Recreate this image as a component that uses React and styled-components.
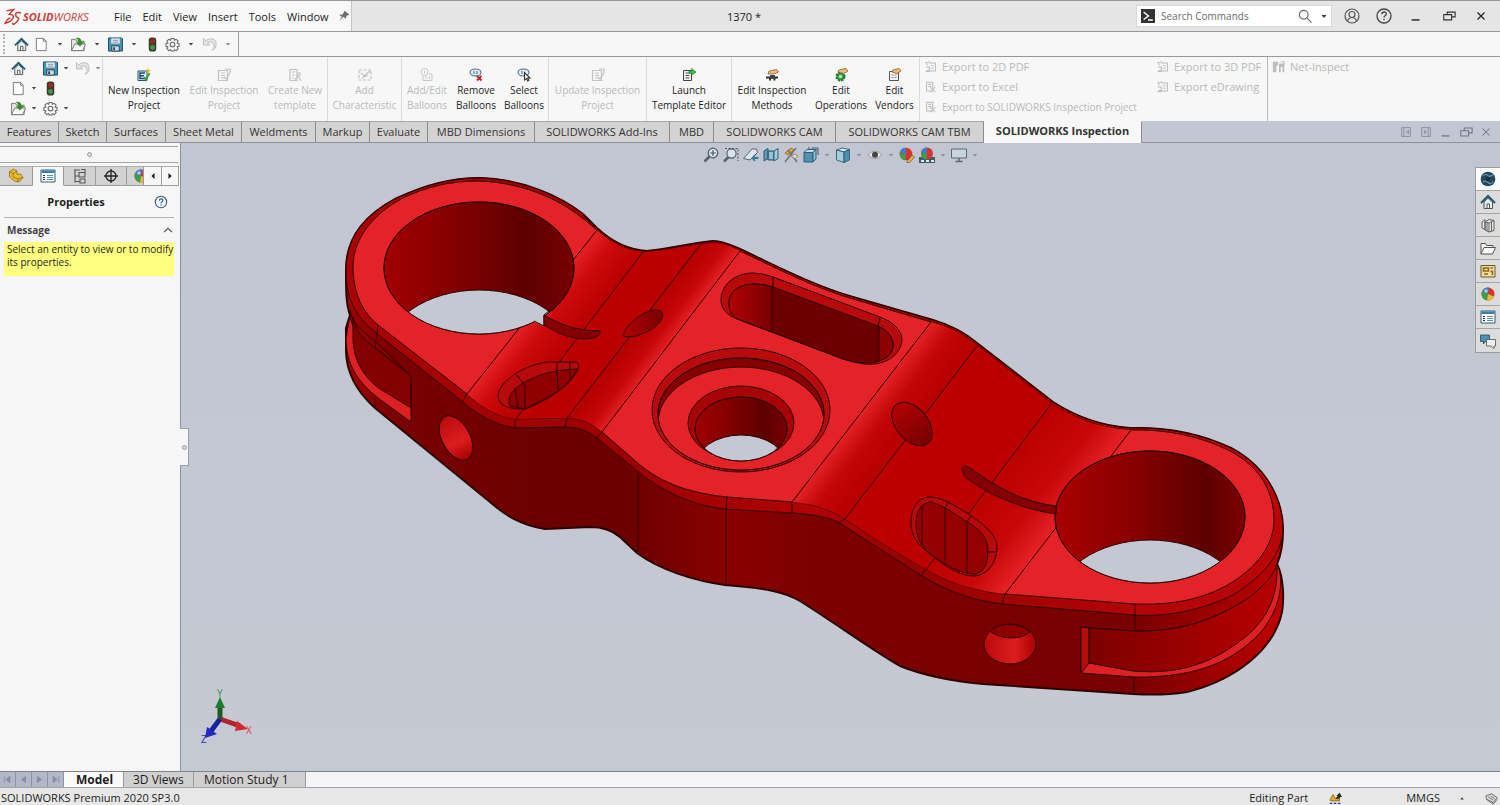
import React, { useState } from "react";
import styled, { createGlobalStyle } from "styled-components";

const GlobalStyle = createGlobalStyle`
  * {
    box-sizing: border-box;
  }
  html, body, #root {
    height: 100%;
    margin: 0;
  }
  body {
    font-family: "Open Sans", "Noto Sans", sans-serif;
    font-size: 11px;
    color: #1c1c1c;
    overflow: hidden;
  }
  button, input {
    font: inherit;
    color: inherit;
    border: 0;
    padding: 0;
    margin: 0;
    background: none;
  }
`;

// Page layout

const Window = styled.div`
  display: flex;
  flex-direction: column;
  height: 100%;
  background: #f7f7f7;
`;

const TitleBar = styled.header`
  display: flex;
  align-items: stretch;
  flex: none;
  height: 32px;
  background: #e5e5e5;
  border-top: 1px solid #98989a;
  border-bottom: 1px solid #98989a;
`;

const Brand = styled.div`
  display: flex;
  align-items: center;
  width: 352px;
  padding-left: 4px;
  background: #f8f8f8;
  border-right: 1px solid #c4c4c4;
`;

const BrandName = styled.span`
  width: 91px;
  margin-left: 2px;
  font-size: 11px;
  font-style: italic;
  color: #c8403a;
`;

const MenuBar = styled.nav`
  display: flex;
  align-items: center;
  gap: 11px;
  padding-top: 2px;
  margin-right: 9px;
`;

const MenuButton = styled.button`
  font-size: 11px;
  line-height: 16px;
`;

const DocumentName = styled.h1`
  flex: 1;
  align-self: center;
  margin: 0;
  font-size: 11px;
  font-weight: 400;
  text-align: center;
`;

const SearchBox = styled.label`
  display: flex;
  align-items: center;
  align-self: center;
  gap: 6px;
  width: 196px;
  height: 22px;
  padding: 0 1px 0 4px;
  background: #fff;
  border: 1px solid #d8d8d8;
`;

const SearchInput = styled.input`
  flex: 1;
  min-width: 0;
  font-size: 10px;
  outline: none;
  &::placeholder {
    color: #6a6a6a;
    opacity: 1;
  }
`;

const WindowButtons = styled.div`
  display: flex;
  align-items: center;
  padding: 0 3px 0 4px;
`;

const IconButton = styled.button`
  display: flex;
  align-items: center;
  justify-content: center;
  flex: none;
  width: ${(p) => p.$w || 20}px;
  height: ${(p) => p.$h || 20}px;
`;

const QuickBar = styled.div`
  display: flex;
  align-items: center;
  flex: none;
  height: 25px;
  border-bottom: 1px solid #98989a;
`;

const QuickTools = styled.div`
  display: flex;
  align-items: center;
  width: 239px;
  height: 100%;
  padding-left: 8px;
  border-right: 1px solid #a0a0a0;
`;

const Grip = styled.span`
  width: 3px;
  height: 20px;
  border-left: 2px dotted #b4b4b4;
  margin-left: -5px;
  margin-right: 5px;
`;

const Ribbon = styled.div`
  display: flex;
  flex: none;
  height: 64px;
`;

const ToolGrid = styled.div`
  display: grid;
  grid-template-columns: 20px 12px 20px 12px 20px 12px;
  grid-template-rows: repeat(3, 20px);
  align-items: center;
  width: 103px;
  padding: 1px 0 0 8px;
  border-right: 1px solid #dadada;
`;

const RibbonGroup = styled.div`
  display: flex;
  border-right: 1px solid #dadada;
`;

const RibbonButton = styled.button`
  display: flex;
  flex-direction: column;
  align-items: center;
  width: ${(p) => p.$w}px;
  padding-top: 10px;
  font-size: 10px;
  line-height: 15px;
  white-space: nowrap;
  color: ${(p) => (p.disabled ? "#b9b9b9" : "#1c1c1c")};
`;

const ExportGroup = styled.div`
  display: grid;
  grid-auto-flow: column;
  grid-template-rows: repeat(3, 20px);
  grid-template-columns: ${(p) => p.$columns};
  align-items: center;
  padding: 1px 0 0 4px;
  border-right: ${(p) => (p.$last ? "0" : "1px solid #b8b8b8")};
`;

const ExportButton = styled.button`
  display: flex;
  align-items: center;
  gap: 4px;
  height: 20px;
  font-size: ${(p) => (p.$long ? 10 : 11)}px;
  line-height: 16px;
  padding-bottom: 2px;
  white-space: nowrap;
  color: #b9b9b9;
`;

const TabRow = styled.div`
  display: flex;
  align-items: stretch;
  flex: none;
  height: 22px;
  background: #c3c7d3;
  border-bottom: 1px solid #8e929c;
`;

const CommandTab = styled.button`
  width: ${(p) => p.$w}px;
  height: ${(p) => (p.$active ? 22 : 21)}px;
  padding-bottom: ${(p) => (p.$active ? 3 : 1)}px;
  white-space: nowrap;
  line-height: 18px;
  font-weight: ${(p) => (p.$active ? 700 : 400)};
  color: #333;
  background: ${(p) => (p.$active ? "#f8f8f8" : "#d3d3d3")};
  border-top: 1px solid ${(p) => (p.$active ? "#f8f8f8" : "#a8a8a8")};
  border-right: 1px solid #8c8c8c;
`;

const DocButtons = styled.div`
  display: flex;
  align-items: center;
  margin-left: auto;
  padding-right: 4px;
`;

const Workspace = styled.main`
  display: flex;
  flex: 1;
  min-height: 0;
`;

const SidePanel = styled.aside`
  position: relative;
  flex: none;
  width: 181px;
  background: #f6f6f6;
  border-right: 1px solid #8e929c;
`;

const Splitter = styled.div`
  display: flex;
  align-items: center;
  justify-content: center;
  height: 17px;
  width: 178px;
  margin-top: 3px;
  border-top: 1px solid #a6a6a6;
  border-bottom: 1px solid #a6a6a6;
`;

const Dot = styled.span`
  width: 5px;
  height: 5px;
  border: 1px solid #9a9a9a;
  border-radius: 50%;
  background: #ddd;
`;

const PanelTabs = styled.div`
  display: flex;
  width: 178px;
  margin-top: 3px;
  height: 20px;
`;

const PanelTab = styled.button`
  display: flex;
  flex: none;
  align-items: center;
  justify-content: ${(p) => (p.$cut ? "flex-start" : "center")};
  width: ${(p) => p.$w}px;
  padding-left: ${(p) => (p.$cut ? 6 : 0)}px;
  overflow: hidden;
  background: ${(p) => (p.$light ? "#f6f6f6" : "#d2d2d2")};
  border-right: 1px solid #9c9c9c;
  border-top: 1px solid #b0b0b0;
  border-bottom: 1px solid ${(p) => (p.$active ? "#f6f6f6" : "#9c9c9c")};
`;

const PanelHeader = styled.div`
  display: flex;
  align-items: center;
  height: 32px;
  margin: 0 6px 0 4px;
  border-bottom: 1px solid #b4b4b4;
`;

const PanelTitle = styled.h2`
  flex: 1;
  margin: 0;
  font-size: 11px;
  font-weight: 700;
  text-align: center;
`;

const MessageToggle = styled.button`
  display: flex;
  align-items: center;
  justify-content: space-between;
  width: 175px;
  height: 24px;
  padding: 0 0 0 7px;
  font-size: 10px;
  font-weight: 700;
  color: #444;
`;

const MessageBox = styled.p`
  width: 170px;
  height: 34px;
  margin: 0 0 0 4px;
  padding: 1px 0 0 3px;
  font-size: 10px;
  line-height: 13px;
  white-space: nowrap;
  background: #ffff80;
`;

const CollapseHandle = styled.button`
  position: absolute;
  z-index: 1;
  left: 180px;
  top: 285px;
  display: flex;
  align-items: center;
  justify-content: center;
  width: 9px;
  height: 38px;
  background: #f6f6f6;
  border: 1px solid #9a9ea8;
  border-left: 0;
`;

const Viewport = styled.section`
  position: relative;
  flex: 1;
  min-width: 0;
  background: linear-gradient(#c2c6d2, #c4c9d2);
`;

const Scene = styled.svg`
  display: block;
  width: 100%;
  height: 100%;
`;

const ViewTools = styled.div`
  position: absolute;
  top: 2px;
  left: 0;
  right: 0;
  display: flex;
  justify-content: center;
`;

const TaskPane = styled.div`
  position: absolute;
  top: 24px;
  right: 0;
  width: 25px;
  border: 1px solid #9a9a9a;
  border-right: 0;
`;

const TaskButton = styled.button`
  display: flex;
  align-items: center;
  justify-content: center;
  width: 24px;
  height: 23px;
  background: ${(p) => (p.$active ? "#fbfbfb" : "#dcdcdc")};
  border-bottom: 1px solid #a4a4a4;
  &:last-child {
    border-bottom: 0;
  }
`;

const SheetTabs = styled.div`
  display: flex;
  flex: none;
  height: 17px;
  background: #f5f5f8;
  border-top: 1px solid #7e828c;
  border-bottom: 1px solid #a0a4ac;
`;

const SheetNav = styled.button`
  display: flex;
  align-items: center;
  justify-content: center;
  width: 16px;
  background: #b3b7c8;
  border-right: 1px solid #8d91a4;
`;

const SheetTab = styled.button`
  width: ${(p) => p.$w}px;
  padding: 0 4px 0 ${(p) => p.$pad}px;
  font-size: 12px;
  line-height: 15px;
  text-align: left;
  white-space: nowrap;
  font-weight: ${(p) => (p.$active ? 700 : 400)};
  background: ${(p) => (p.$active ? "#fafafa" : "#d0d0d0")};
  border-right: 1px solid #9a9a9a;
`;

const StatusBar = styled.footer`
  display: flex;
  align-items: center;
  flex: none;
  height: 17px;
  padding: 3px 1px 0;
  line-height: 14px;
  background: #e7e7e7;
`;

const StatusText = styled.span`
  margin-left: ${(p) => p.$gap || 0}px;
`;

const StatusRight = styled.div`
  display: flex;
  align-items: center;
  margin-left: auto;
`;

// Icons, all on a 16 x 16 grid

const glyphs = {
  ds: (
    <g fill="none" stroke="#c8352c" strokeWidth="1.300" strokeLinecap="round">
      <path d="M3 2.500L9 1.500 5 6q5 0 3.500 3.500T1 14.500Q3 10 5.500 9.500" />
      <path d="M15.500 4.500q-4.500-1-4.500 1.500t2 3t-1 4-4 1.500" />
    </g>
  ),
  caret: <path d="M4.500 6.500h7L8 10.500z" fill="#444" />,
  caretGray: <path d="M4.500 6.500h7L8 10.500z" fill="#888c94" />,
  caretUp: <path d="M5.500 10h5l-2.500-3z" fill="#444" />,
  home: (
    <g>
      <path d="M4 8v6.500h8.500V8L8 4z" fill="#e8eef0" stroke="#555" />
      <path d="M1 9L8 2 15 9" fill="none" stroke="#24586e" strokeWidth="2" />
      <path d="M7 14v-4h2.500v4" fill="#fff" stroke="#555" />
    </g>
  ),
  doc: <path d="M2.500 1.500h7.500l3 3v10H2.500zM10 1.500v3h3" fill="#fff" stroke="#777" />,
  open: (
    <g>
      <path d="M.5 14.500V2.500h4.500l1 2H14v10z" fill="#e8e4da" stroke="#777" />
      <path d="M.5 14.500l3.500-7h11.500L12.500 14.500z" fill="#fafafa" stroke="#777" />
      <path d="M5 1q6-1 6 4h3L9.500 10 5 5.500H8q0-3-3-4.500z" fill="#3a8a2f" />
    </g>
  ),
  save: (
    <g>
      <path d="M.5 1h14l1 1v13H.5z" fill="#4b93b4" stroke="#1d4a60" />
      <path d="M3.500 1.500h9V7h-9z" fill="#eaf2f5" />
      <path d="M5 3.500h6M5 5.500h6" stroke="#889" />
      <path d="M4 9.500h8V15H4z" fill="#cfdde3" stroke="#1d4a60" />
      <path d="M5.500 11h2v3h-2z" fill="#345" />
    </g>
  ),
  light: (
    <g>
      <rect x="4" y=".5" width="8" height="15" rx="3" fill="#33402c" />
      <circle cx="8" cy="4.500" r="2.600" fill="#a4251b" />
      <circle cx="8" cy="11.200" r="2.600" fill="#50914b" />
    </g>
  ),
  gear: (
    <g fill="#f5f5f5" stroke="#666" strokeWidth="1.100">
      <path d="M6.500 1.500h3l.5 2 2-1 2 2-1 2 2 .5v3l-2 .5 1 2-2 2-2-1-.5 1.500h-3l-.5-1.500-2 1-2-2 1-2-2-.5V7l2-.5-1-2 2-2 2 1z" />
      <circle cx="8" cy="8" r="2.500" />
    </g>
  ),
  undo: (
    <path d="M1.500 1.500v7h6.500L6 6q5-2 6.500 2t-2 6q5-1 4.500-7T9 2 4 4.500z" fill="#e4e4e4" stroke="#bdbdbd" />
  ),
  pin: <path d="M9 1l6 5-1.500 1-2 .5-1 4-3.500-2.500L1.500 15 5 9 1.500 6.500l5-1L7.500 3z" fill="#707070" />,
  prompt: (
    <g>
      <path d="M0 0h16v16H0z" fill="#333" />
      <path d="M3 3.500L8.500 8 3 12M8 12.500h5.500" fill="none" stroke="#fff" strokeWidth="1.600" />
    </g>
  ),
  search: (
    <g fill="none" stroke="#666" strokeWidth="1.300">
      <circle cx="6.500" cy="6.500" r="5" />
      <path d="M10.500 10.500l5 5" />
    </g>
  ),
  user: (
    <g fill="none" stroke="#555" strokeWidth="1.200">
      <circle cx="8" cy="8" r="7" />
      <circle cx="8" cy="6.500" r="3" />
      <path d="M3.500 13q1-3.500 4.500-3.500t4.500 3.500" />
    </g>
  ),
  help: (
    <g fill="none" stroke="#444" strokeWidth="1.300">
      <circle cx="8" cy="8" r="7" />
      <path d="M5.700 6.200q.3-2.200 2.400-2.200t2.200 2q0 1-1.200 1.700T8 9.500M8 10.800v1.500" />
    </g>
  ),
  helpBlue: (
    <g fill="#eef4f8" stroke="#33566e" strokeWidth="1.200">
      <circle cx="8" cy="8" r="6.500" />
      <path d="M6 6.400q.3-2 2.100-2t2 1.800q0 .9-1.100 1.600T8 9.400M8 10.600v1.400" fill="none" />
    </g>
  ),
  min: <path d="M3 12.500h9" stroke="#333" strokeWidth="1.800" />,
  restore: <path d="M6 6V3.500h9V9h-4M2 6.500h9v6H2z" fill="none" stroke="#333" strokeWidth="1.300" />,
  close: <path d="M4 4l8 8M12 4l-8 8" stroke="#222" strokeWidth="1.500" />,
  minGray: <path d="M3 12.500h9" stroke="#727680" strokeWidth="1.500" />,
  restoreGray: <path d="M6 6V3.500h9V9h-4M2 6.500h9v6H2z" fill="none" stroke="#727680" strokeWidth="1.200" />,
  closeGray: <path d="M4 4l8 8M12 4l-8 8" stroke="#727680" strokeWidth="1.200" />,
  panelLeft: <path d="M3 3h10v10H3zM5.500 3v10M11 6L8.500 8 11 10z" fill="none" stroke="#858993" />,
  panelRight: <path d="M3 3h10v10H3zM10.500 3v10M6 6l2.500 2L6 10z" fill="none" stroke="#858993" />,
  newInspection: (
    <g>
      <path d="M2 4h9v9.500H2z" fill="#dff0f8" stroke="#1d5573" />
      <path d="M9 6H4v5.500h5M4 8.700h4" fill="none" stroke="#1d4a78" strokeWidth="1.500" />
      <path d="M8.500 10l1.500 3 3.500-7" fill="none" stroke="#4c9a3a" strokeWidth="1.800" />
      <path d="M12 1l1 2 2 .5-2 1-.5 2.500-1.500-2.500L9 4l2-.7z" fill="#e8b822" />
    </g>
  ),
  grayForm: (
    <g fill="none" stroke="#c2c2c2" strokeWidth="1.200">
      <path d="M2.500 3.500h9v10h-9zM5 6h4M5 8.500h4M5 11h3" />
      <path d="M8 10l2 2 4-6M9 2h5v4" />
    </g>
  ),
  grayTemplate: (
    <g fill="none" stroke="#c2c2c2" strokeWidth="1.200">
      <path d="M3 2.500h7v11H3zM5 5h3M5 8h3M5 11h2" />
      <path d="M8 13l3-5 3 6M10 6h3v3" />
    </g>
  ),
  grayCharacteristic: (
    <g fill="none" stroke="#c2c2c2" strokeWidth="1.200">
      <path d="M2 3h12v10H2z" strokeDasharray="3 1.500" />
      <path d="M4 6l3 3 6-5M5 11l6-3" />
    </g>
  ),
  grayBalloon: (
    <g fill="none" stroke="#c8c8c8">
      <circle cx="5.500" cy="5" r="3.500" />
      <path d="M5.500 3.500v3M4 9v4.500h9V7H9.500M7 9v3M10.500 9v3" />
    </g>
  ),
  balloonRemove: (
    <g fill="none" stroke="#4c6f92" strokeWidth="1.100">
      <ellipse cx="7.500" cy="5.500" rx="5.500" ry="3.500" fill="#e4edf5" />
      <path d="M6 4v3M9 4v3" />
      <path d="M9 9l4.500 4.500M13.500 9L9 13.500" stroke="#c81e2b" strokeWidth="1.800" />
    </g>
  ),
  balloonSelect: (
    <g fill="none" stroke="#4c6f92" strokeWidth="1.100">
      <ellipse cx="7.500" cy="5.500" rx="5.500" ry="3.500" fill="#e4edf5" />
      <path d="M6 4v3" />
      <path d="M8.500 5.500v7.500l2-1.500 1.200 2.500 1.200-.7-1.200-2.300h2.300z" fill="#fff" stroke="#333" />
    </g>
  ),
  launch: (
    <g>
      <path d="M2.500 3.500h8v10h-8z" fill="#f2f2f2" stroke="#444" />
      <path d="M4.500 6h4M4.500 8.500h4M4.500 11h4" stroke="#555" />
      <path d="M8 4h2.500V1.500L15 5l-4.500 3.500V6.500H8z" fill="#3eb443" stroke="#237d2b" strokeWidth=".6" />
    </g>
  ),
  methods: (
    <g>
      <path d="M4 7q0-3.500 3.500-3.500l5-1 2 2.500-5 2z" fill="#f0b97b" stroke="#8a5a2c" strokeWidth=".8" />
      <path d="M2 9.500h12v2h-2.500v2h-2v-2H7v2H5v-2H2z" fill="#333" />
      <path d="M6 8h5v4H6z" fill="#444" />
    </g>
  ),
  operations: (
    <g>
      <circle cx="7.500" cy="9.500" r="4" fill="#2fa341" stroke="#1e7a2d" strokeWidth="2" strokeDasharray="2.200 1" />
      <circle cx="7.500" cy="9.500" r="1.600" fill="#d5f0cf" />
      <path d="M5 5q0-2.500 3-2.500l5-1 2 2.500-4.500 2.500z" fill="#f0b97b" stroke="#8a5a2c" strokeWidth=".8" />
    </g>
  ),
  vendors: (
    <g>
      <path d="M2.500 4.500h9v9h-9z" fill="#f1f1f1" stroke="#555" />
      <path d="M4.500 8h5M4.500 10.500h5" stroke="#888" strokeDasharray="2 1" />
      <path d="M5 5q0-2.500 3-2.500l4-1 2 2.500-4 2.500z" fill="#f0b97b" stroke="#8a5a2c" strokeWidth=".8" />
    </g>
  ),
  grayExport: (
    <g fill="none" stroke="#bcbcbc" strokeWidth="1.200">
      <path d="M6 3.500h7v9H6M8 6.500h3M8 9.500h3" />
      <path d="M7 2L2 3.500 4 6M2 8h4v5H2M5 11l-3 3" />
    </g>
  ),
  grayExcel: (
    <g fill="none" stroke="#bcbcbc" strokeWidth="1.200">
      <path d="M3 2.500h7v10H3zM5 5h3M5 7.500h3" />
      <path d="M7 8l6 6M13 8l-6 6" />
    </g>
  ),
  netInspect: (
    <g fill="#bebebe">
      <path d="M1 2h6v3L5 7v7H1zM8 4h6v10h-2V8h-2v6H8z" />
      <path d="M10 2h4v4" fill="none" stroke="#bbb" />
    </g>
  ),
  part: (
    <g fill="#e9bd35" stroke="#9a7410" strokeWidth=".9">
      <path d="M1.500 3.500l4-2.500 3.500 2v3.500l3.500-.5 2.500 3.500-4 4.500-4.500-1-5-4z" />
      <path d="M1.500 3.500l3.500 2v3.500l5 2 5-1.500M9 3L5 5.500M10 11v3" fill="none" />
    </g>
  ),
  list: (
    <g>
      <path d="M1 2h14v12H1z" fill="#fff" stroke="#345f78" />
      <path d="M1.500 2.500h13v2.500h-13z" fill="#3b80a3" />
      <path d="M3 7.500h2M3 9.500h2M3 11.500h2" stroke="#234" />
      <path d="M7 7.500h6M7 9.500h6M7 11.500h6" stroke="#5790ae" />
    </g>
  ),
  config: (
    <g fill="none" stroke="#555" strokeWidth="1.100">
      <path d="M3 1.500v13M2 2h6M3 8h4M3 13.500h5" />
      <path d="M7 4.500h6V9H7zM8 11h5v4H8zM9 1.500h4v3" />
    </g>
  ),
  target: (
    <g fill="none" stroke="#222" strokeWidth="1.300">
      <circle cx="8" cy="8" r="5" />
      <path d="M8 1v14M1 8h14" />
    </g>
  ),
  ball: (
    <g>
      <circle cx="8" cy="8" r="6.500" fill="#d8342b" />
      <path d="M8 8L2 5.500A6.500 6.500 0 0 1 9 1.600z" fill="#3f7bd0" />
      <path d="M8 8L2 5.500A6.500 6.500 0 0 0 7 14.400z" fill="#3aa144" />
      <path d="M8 8l-1 6.400q5 .4 7-4z" fill="#e5b93a" />
      <circle cx="6" cy="5" r="1.800" fill="#fff" opacity=".6" />
    </g>
  ),
  left: <path d="M10 4v8L6 8z" fill="#111" />,
  right: <path d="M6 4v8l4-4z" fill="#111" />,
  chevronUp: <path d="M3.500 10.500L8 6l4.500 4.500" fill="none" stroke="#555" strokeWidth="1.400" />,
  zoomFit: (
    <g fill="none" stroke="#4b5c66" strokeWidth="1.200">
      <circle cx="10" cy="6" r="4.800" fill="#d8e4ea" />
      <path d="M10 3v6M7 6h6" />
      <path d="M6.500 9.500L1.500 14.500" stroke="#5a6064" strokeWidth="2.500" />
    </g>
  ),
  zoomArea: (
    <g fill="none" stroke="#4b5c66" strokeWidth="1.100">
      <path d="M2 1.500h13V14" strokeDasharray="2 1.500" />
      <circle cx="8.500" cy="6.500" r="4.600" fill="#d8e4ea" />
      <path d="M5.500 10L1 14.500" stroke="#5a6064" strokeWidth="2.500" />
    </g>
  ),
  prevView: (
    <g stroke="#52656e" strokeWidth="1">
      <path d="M.5 11.500L9 2l4.500 0 1 3.500L7 13z" fill="#dfe7ea" />
      <path d="M15.500 11H9.500l2.500-3M9.500 11L12 14" fill="none" stroke="#2f7d99" strokeWidth="1.800" />
    </g>
  ),
  section: (
    <g stroke="#2c5d74" strokeWidth="1">
      <path d="M1 4l4-2.500v10L1 14zM5 4h6v9H5z" fill="#5d9cb7" />
      <path d="M11 4l4-2.500v10L11 14z" fill="#a8cddc" />
      <path d="M7 5v7M9 5v7" stroke="#d8e8ee" />
    </g>
  ),
  dynamic: (
    <g>
      <path d="M2 6l6-5 3 2-6 5z" fill="#e7a23b" stroke="#9a651a" strokeWidth=".8" />
      <path d="M2 15L13 1M5 3l9 12" stroke="#6c7478" strokeWidth="1.500" />
      <path d="M8 9l4-2 3 2-3 3z" fill="#e6d7b2" stroke="#777" strokeWidth=".7" />
    </g>
  ),
  orient: (
    <g stroke="#2c5d74">
      <path d="M1 5.500h9V15H1z" fill="#4f93b0" />
      <path d="M1 5.500l3-3h9l-3 3z" fill="#c3dde7" />
      <path d="M10 5.500l3-3V12l-3 3z" fill="#8fc0d2" />
      <path d="M8.500 1h6.500v7M5 1h2" fill="none" stroke="#456" />
    </g>
  ),
  cube: (
    <g stroke="#2c5d74" strokeWidth=".9">
      <path d="M1.500 3l5.500-2 7.500 1.500-5.500 2.500z" fill="#d8eaf0" />
      <path d="M1.500 3L9 5v10.500L1.500 13z" fill="#a5cddc" />
      <path d="M9 5l5.500-2.500V13L9 15.500z" fill="#4a8fae" />
    </g>
  ),
  eye: (
    <g>
      <path d="M1 8q7-8 14 0-7 7-14 0z" fill="#e4e4e6" stroke="#8a8a8a" strokeWidth=".8" />
      <circle cx="8" cy="7.800" r="3" fill="#454545" />
    </g>
  ),
  appearance: (
    <g>
      <circle cx="7" cy="7" r="6.300" fill="#d8342b" />
      <path d="M7 7L.7 6A6.300 6.300 0 0 1 7 .7z" fill="#3f7bd0" />
      <path d="M7 7L.7 6.500A6.300 6.300 0 0 0 6 13.300z" fill="#3aa144" />
      <path d="M8 14.500l5-6.500 2.500 2-5 5.500-2.500.5z" fill="#e6b450" stroke="#6b4b1a" strokeWidth=".7" />
    </g>
  ),
  scene: (
    <g>
      <path d="M0 10h16v6H0z" fill="#3e5a66" />
      <path d="M2 13h3v2H2zM7 13h3v2H7zM12 13h3v2h-3z" fill="#e0e8ea" />
      <circle cx="8" cy="6.500" r="6" fill="#d8342b" />
      <path d="M8 6.500L2 6A6 6 0 0 1 8 .5z" fill="#3f7bd0" />
      <path d="M8 6.500L2 6Q2.500 12 7.500 12.500z" fill="#3aa144" />
    </g>
  ),
  monitor: (
    <g stroke="#5b6772">
      <path d="M.5 2h15v9H.5z" fill="#c9d5de" />
      <path d="M4.500 14.500h7M8 11v3" fill="none" strokeWidth="1.500" />
    </g>
  ),
  globe: (
    <g>
      <circle cx="8" cy="8" r="7.300" fill="#26485f" />
      <path d="M3 4.500q3-2 5 0t5-1M3 11q2-2 5 .5t5-1" fill="none" stroke="#6d93ab" strokeWidth="1.200" />
      <circle cx="8" cy="8" r="2.200" fill="#16303f" />
    </g>
  ),
  library: (
    <g fill="#e6e6e2" stroke="#555" strokeWidth=".9">
      <path d="M2 5l3-2.500v10L2 11zM5 5l4-2.500 5 1v10L9 15l-4-2z" />
      <path d="M5 5l4 1v9M9 6l5-2.500M7 5.500v8.500M11.500 5v9" fill="none" />
    </g>
  ),
  folder: (
    <g fill="#fafafa" stroke="#555">
      <path d="M1 14V3.500h4.500l1 2h6.500v2" />
      <path d="M1 14l3-6.500h11.500L12.500 14z" />
    </g>
  ),
  palette: (
    <g>
      <path d="M1 2.500h14v11.500H1z" fill="#f2dc9c" stroke="#6b5a2c" />
      <path d="M3.500 5h5v3h-5zM4 11h4M10.500 5h2.500M10.500 8.500h2v3.500" fill="none" stroke="#8a661f" strokeWidth="1.500" />
    </g>
  ),
  forum: (
    <g strokeWidth=".8">
      <path d="M.5 2h9v6.500H5L3.500 11V8.500h-3z" fill="#4b93b4" stroke="#1d4a60" />
      <path d="M6.500 6.500h9V13H14v2.500L11 13H6.500z" fill="#eee" stroke="#555" />
    </g>
  ),
  first: <path d="M4 4v8M11 4v8L6 8z" fill="#888ca2" stroke="#888ca2" />,
  prev: <path d="M11 3.500v9L5 8z" fill="#888ca2" />,
  next: <path d="M5 3.500v9L11 8z" fill="#888ca2" />,
  last: <path d="M12 4v8M5 4v8l5-4z" fill="#888ca2" stroke="#888ca2" />,
  rebuild: (
    <g>
      <path d="M1 10l4-7 3 5 5-1v4H2z" fill="#e0a928" stroke="#6b4b12" strokeWidth=".8" />
      <path d="M8 8l3-3H9l4-4 3 5h-2q-1 3-6 2z" fill="#222" />
      <path d="M1 14h3M6 14h3M11 14h3" stroke="#223a70" strokeWidth="1.800" fill="none" />
    </g>
  ),
  tag: (
    <g fill="#ddd" stroke="#555" strokeWidth="1">
      <path d="M1 5l7-3 7 5-5 6-8-4z" />
      <path d="M4 6l6 4M7 4.500l5 4M2 9l8 6 5-6" fill="none" />
    </g>
  ),
};

const IconSvg = styled.svg`
  display: block;
  flex: none;
`;

const Icon = ({ name, size = 14 }) => (
  <IconSvg width={size} height={size} viewBox="0 0 16 16" aria-hidden="true">
    {glyphs[name]}
  </IconSvg>
);

// Data

const menus = ["File", "Edit", "View", "Insert", "Tools", "Window"];

const quickTools = [
  { icon: "home", label: "Home" },
  { icon: "doc", label: "New", menu: true },
  { icon: "open", label: "Open", menu: true },
  { icon: "save", label: "Save", menu: true },
  { icon: "light", label: "Rebuild" },
  { icon: "gear", label: "Options", menu: true },
  { icon: "undo", label: "Undo", menu: true, off: true },
];

const gridTools = [
  { icon: "home", label: "Home" },
  null,
  { icon: "save", label: "Save" },
  { icon: "caret", label: "Save menu" },
  { icon: "undo", label: "Undo" },
  { icon: "caretGray", label: "Undo menu" },
  { icon: "doc", label: "New" },
  { icon: "caret", label: "New menu" },
  { icon: "light", label: "Rebuild" },
  null,
  null,
  null,
  { icon: "open", label: "Open" },
  { icon: "caret", label: "Open menu" },
  { icon: "gear", label: "Options" },
  { icon: "caret", label: "Options menu" },
];

const ribbonGroups = [
  [
    { lines: ["New Inspection", "Project"], icon: "newInspection", w: 82 },
    { lines: ["Edit Inspection", "Project"], icon: "grayForm", w: 78, off: true },
    { lines: ["Create New", "template"], icon: "grayTemplate", w: 64, off: true },
  ],
  [{ lines: ["Add", "Characteristic"], icon: "grayCharacteristic", w: 73, off: true }],
  [
    { lines: ["Add/Edit", "Balloons"], icon: "grayBalloon", w: 50, off: true },
    { lines: ["Remove", "Balloons"], icon: "balloonRemove", w: 48 },
    { lines: ["Select", "Balloons"], icon: "balloonSelect", w: 48 },
  ],
  [{ lines: ["Update Inspection", "Project"], icon: "grayForm", w: 97, off: true }],
  [{ lines: ["Launch", "Template Editor"], icon: "launch", w: 84 }],
  [
    { lines: ["Edit Inspection", "Methods"], icon: "methods", w: 80 },
    { lines: ["Edit", "Operations"], icon: "operations", w: 58 },
    { lines: ["Edit", "Vendors"], icon: "vendors", w: 49 },
  ],
];

const exportItems = [
  { text: "Export to 2D PDF", icon: "grayExport" },
  { text: "Export to Excel", icon: "grayExcel" },
  { text: "Export to SOLIDWORKS Inspection Project", icon: "grayExcel", long: true },
  { text: "Export to 3D PDF", icon: "grayExport" },
  { text: "Export eDrawing", icon: "grayExport" },
];

const commandTabs = [
  ["Features", 59],
  ["Sketch", 48],
  ["Surfaces", 59],
  ["Sheet Metal", 76],
  ["Weldments", 74],
  ["Markup", 54],
  ["Evaluate", 58],
  ["MBD Dimensions", 107],
  ["SOLIDWORKS Add-Ins", 135],
  ["MBD", 44],
  ["SOLIDWORKS CAM", 122],
  ["SOLIDWORKS CAM TBM", 148],
  ["SOLIDWORKS Inspection", 158],
];

const viewTools = [
  { icon: "zoomFit", label: "Zoom to Fit" },
  { icon: "zoomArea", label: "Zoom to Area" },
  { icon: "prevView", label: "Previous View" },
  { icon: "section", label: "Section View" },
  { icon: "dynamic", label: "Dynamic Annotation Views" },
  { icon: "orient", label: "View Orientation", menu: true },
  { icon: "cube", label: "Display Style", menu: true },
  { icon: "eye", label: "Hide/Show Items", menu: true },
  { icon: "appearance", label: "Edit Appearance" },
  { icon: "scene", label: "Apply Scene", menu: true },
  { icon: "monitor", label: "View Settings", menu: true },
];

const taskTools = [
  ["globe", "3DEXPERIENCE"],
  ["home", "Resources"],
  ["library", "Design Library"],
  ["folder", "File Explorer"],
  ["palette", "View Palette"],
  ["ball", "Appearances"],
  ["list", "Custom Properties"],
  ["forum", "Forum"],
];

// The machined part and the origin triad

const TOP_FACE =
  "M353 265C354 238 373 214 403 198C426 187 450 181 478 181C520 182 557 198 581 217L597 230C612 244 628 251 645 252C665 251 690 244 713 243C723 243 731 246 740 251C778 269 815 288 853 299L931 322C950 327 963 334 977 345L1052 404C1075 419 1100 428 1131 430C1165 429 1200 436 1228 450C1260 466 1274 492 1274 520C1274 548 1252 573 1220 589C1192 602 1165 605 1135 604L1005 594C975 591 945 581 925 569L880 542L845 519C832 510 815 504 792 502L727 497C700 494 668 488 640 465L602 432C590 422 580 418 567 418L515 419C495 416 480 406 467 394L378 325C360 310 353 290 353 265Z";

const FILLET =
  "M346 270C346 235 367 214 397 198C425 185 450 178 480 178C522 179 560 196 583 214L597 228C613 243 630 250 647 251C670 249 690 243 713 241C722 241 731 245 740 249C778 267 815 286 853 297L933 320C953 326 965 333 977 343L1053 402C1075 416 1100 426 1130 428C1166 427 1202 434 1231 448C1265 466 1283 498 1283 530C1282 555 1262 577 1233 595C1200 611 1165 617 1135 615L1002 604C970 600 945 590 922 576L838 522C828 517 810 514 792 513L725 509C695 506 660 492 630 465L597 438C588 431 578 427 565 427L515 428C495 425 478 415 463 402L375 332C355 316 346 298 346 270Z";

const SILHOUETTE =
  "M346 270C346 235 367 214 397 198C425 185 450 178 480 178C522 179 560 196 583 214L597 228C613 243 630 250 647 251C670 249 690 243 713 241C722 241 731 245 740 249C778 267 815 286 853 297L933 320C953 326 965 333 977 343L1053 402C1075 416 1100 426 1130 428C1166 427 1202 434 1231 448C1265 466 1283 498 1283 530C1283 545 1281 555 1277 564C1284 578 1284 600 1282 612C1274 650 1235 680 1187 692C1168 695 1150 695 1133 694L983 684C950 681 925 676 900 666C875 652 835 623 800 601C785 592 765 588 725 585C695 581 660 570 637 553L620 537C612 530 602 527 590 527L545 529C520 525 505 515 490 502L375 408C355 390 346 372 346 350V328L350 315C346 305 346 290 346 270Z";

const LEFT_POCKET =
  "M498 395C499 380 530 362 550 362H577C582 366 574 380 560 390C548 399 536 405 525 409C508 409 498 406 498 395Z";

const RIGHT_POCKET =
  "M911 523C911 508 918 497 930 497C942 497 955 506 967 513C985 525 997 535 997 547C997 562 988 576 973 576C955 575 940 562 925 550C915 541 911 533 911 523Z";

const RIGHT_POCKET_FLOOR =
  "M916 523C916 512 921 503 930 502C943 505 955 514 967 522C982 530 988 540 988 550C988 562 985 571 976 574C958 574 940 562 927 551C918 541 916 533 916 523Z";

const Model = () => (
  <Scene viewBox="181 143 1319 628" role="img" aria-label="Part 1370">
    <defs>
      <clipPath id="top"><path d={TOP_FACE} /></clipPath>
      <clipPath id="boreL"><ellipse cx="479" cy="268" rx="95" ry="66" /></clipPath>
      <clipPath id="boreR"><ellipse cx="1150" cy="517" rx="95" ry="66" /></clipPath>
      <clipPath id="boreM"><ellipse cx="741" cy="429" rx="46" ry="32" /></clipPath>
      <clipPath id="recess"><ellipse cx="741" cy="414" rx="83" ry="56" /></clipPath>
      <linearGradient id="bend1" gradientUnits="userSpaceOnUse" x1="597" y1="230" x2="636" y2="261">
        <stop offset="0" stopColor="#e42226" />
        <stop offset=".4" stopColor="#cc0a0b" />
        <stop offset="1" stopColor="#b90000" />
      </linearGradient>
      <linearGradient id="bend2" gradientUnits="userSpaceOnUse" x1="700" y1="245" x2="728" y2="266">
        <stop offset="0" stopColor="#b40000" />
        <stop offset=".6" stopColor="#c60608" />
        <stop offset="1" stopColor="#e42226" />
      </linearGradient>
      <linearGradient id="bend3" gradientUnits="userSpaceOnUse" x1="931" y1="322" x2="971" y2="353">
        <stop offset="0" stopColor="#e22226" />
        <stop offset=".45" stopColor="#c30506" />
        <stop offset="1" stopColor="#b60000" />
      </linearGradient>
      <linearGradient id="bend4" gradientUnits="userSpaceOnUse" x1="1052" y1="403" x2="1114" y2="451">
        <stop offset="0" stopColor="#bb0000" />
        <stop offset=".6" stopColor="#c80708" />
        <stop offset="1" stopColor="#e42226" />
      </linearGradient>
      <linearGradient id="bore">
        <stop offset="0" stopColor="#a00000" />
        <stop offset=".35" stopColor="#850000" />
        <stop offset=".75" stopColor="#5c0000" />
        <stop offset="1" stopColor="#780000" />
      </linearGradient>
      <linearGradient id="bore2">
        <stop offset="0" stopColor="#a80000" />
        <stop offset=".4" stopColor="#8a0000" />
        <stop offset=".78" stopColor="#5c0000" />
        <stop offset="1" stopColor="#7c0000" />
      </linearGradient>
      <linearGradient id="side" gradientUnits="userSpaceOnUse" x1="346" y1="0" x2="1283" y2="0">
        <stop offset="0" stopColor="#a00000" />
        <stop offset=".05" stopColor="#7a0000" />
        <stop offset=".2" stopColor="#6c0000" />
        <stop offset=".3" stopColor="#6c0000" />
        <stop offset=".41" stopColor="#8a0000" />
        <stop offset=".5" stopColor="#7c0000" />
        <stop offset=".84" stopColor="#780000" />
        <stop offset="1" stopColor="#bd0000" />
      </linearGradient>
      <linearGradient id="edge" gradientUnits="userSpaceOnUse" x1="346" y1="0" x2="1283" y2="0">
        <stop offset="0" stopColor="#a80305" />
        <stop offset=".12" stopColor="#a40204" />
        <stop offset=".3" stopColor="#9c0000" />
        <stop offset=".5" stopColor="#b00406" />
        <stop offset=".6" stopColor="#960000" />
        <stop offset=".84" stopColor="#b20508" />
        <stop offset="1" stopColor="#b80508" />
      </linearGradient>
      <linearGradient id="wall" gradientUnits="userSpaceOnUse" x1="1088" y1="0" x2="1276" y2="0">
        <stop offset="0" stopColor="#7c0000" />
        <stop offset="1" stopColor="#b60000" />
      </linearGradient>
      <linearGradient id="drill">
        <stop offset="0" stopColor="#bb0a0c" />
        <stop offset=".6" stopColor="#dc1d20" />
        <stop offset="1" stopColor="#a80000" />
      </linearGradient>
      <linearGradient id="shaft">
        <stop offset="0" stopColor="#b00204" />
        <stop offset="1" stopColor="#780000" />
      </linearGradient>
    </defs>

    <g stroke="#2c0000" strokeLinejoin="round" fill="none">
      <path d={SILHOUETTE} fill="url(#side)" strokeWidth="2" />

      {/* grooves under both clamp ends */}
      <path d="M350 315C352 330 360 338 374 347L411 376V422L378 398C358 382 346 365 346 338Z" fill="#dd2024" />
      <path d="M353 317C356 332 362 338 374 347L411 376V408L380 389C362 376 353 358 353 338Z" fill="#820000" />
      <path d="M350 310C352 322 360 330 375 341L411 376" />
      <path d="M1081 627L1135 631C1180 632 1215 620 1250 597C1266 584 1274 575 1277 563C1285 582 1280 610 1260 633C1230 665 1190 678 1133 677L1081 673Z" fill="#dc2024" />
      <path d="M1081 627L1089 628V663L1081 673Z" fill="#b80b0c" />
      <path d="M1089 628L1135 631C1180 632 1215 620 1250 597C1266 584 1274 575 1277 563C1278 590 1272 612 1250 633C1215 663 1180 675 1133 671L1089 663Z" fill="url(#wall)" />

      <path d={FILLET} fill="url(#edge)" />
      <path d={TOP_FACE} fill="#e32327" />

      <g clipPath="url(#top)">
        <path d="M610 214L650 243L504 433L454 410Z" fill="url(#bend1)" stroke="none" />
        <path d="M650 243L707 236L560 427L504 433Z" fill="#bb0000" stroke="none" />
        <path d="M707 236L752 235L591 448L560 427Z" fill="url(#bend2)" stroke="none" />
        <path d="M943 306L989 330L833 534L780 518Z" fill="url(#bend3)" stroke="none" />
        <path d="M989 330L1060 393L910 590L833 534Z" fill="#bc0000" stroke="none" />
        <path d="M1060 393L1143 415L992 608L910 590Z" fill="url(#bend4)" stroke="none" />
        <path d="M597 230L467 394M643 252L515 420M700 245L567 418M740 251L602 432M931 322L792 502M977 346L845 519M1052 403L922 575M1131 430L1005 594" />
      </g>

      {/* fillet seams */}
      <path d="M378 325L375 349M375 398V408M467 394L462 403M515 420V429M567 418L565 427M602 432L596 439M727 497L726 509M792 502V513M845 519L838 523M925 569L921 577M1005 594L1002 604M1135 604V631M1134 677V694M583 215L597 230" />
      <path d="M638 471V554M726 509V585" />

      {/* clamp bores */}
      <ellipse cx="479" cy="268" rx="95" ry="66" fill="url(#bore)" />
      <g clipPath="url(#boreL)">
        <ellipse cx="479" cy="356" rx="95" ry="66" fill="#c4c8d2" />
      </g>
      <ellipse cx="479" cy="268" rx="95" ry="66" />
      <path d="M546 312L544 315V326L534 321Z" fill="#c4c8d2" stroke="#c4c8d2" />
      <path d="M534 321L544 326V315L551 309" />
      <path d="M544 315C560 325 578 331 600 331C601 336 594 339 584 339C567 338 555 332 544 325Z" fill="#850000" />
      <ellipse cx="1150" cy="517" rx="95" ry="66" fill="url(#bore2)" />
      <g clipPath="url(#boreR)">
        <ellipse cx="1150" cy="606" rx="95" ry="66" fill="#c4c8d2" />
      </g>
      <ellipse cx="1150" cy="517" rx="95" ry="66" />
      <path d="M962 468C963 465 967 466 972 469C1000 490 1025 502 1056 506V514C1020 509 985 493 964 476Z" fill="#850000" />

      {/* centre recess */}
      <ellipse cx="741" cy="410" rx="89" ry="62" fill="#b80b0d" />
      <ellipse cx="741" cy="414" rx="83" ry="56" fill="#860000" />
      <g clipPath="url(#recess)">
        <ellipse cx="741" cy="423" rx="83" ry="56" fill="#e32327" />
      </g>
      <ellipse cx="741" cy="414" rx="83" ry="56" />
      <ellipse cx="741" cy="423" rx="53" ry="37" fill="#a60406" />
      <ellipse cx="741" cy="429" rx="46" ry="32" fill="url(#bore)" />
      <g clipPath="url(#boreM)">
        <ellipse cx="741" cy="467" rx="46" ry="32" fill="#c4c8d2" />
      </g>
      <ellipse cx="741" cy="429" rx="46" ry="32" />

      {/* long slot */}
      <path d="M721 300C721 284 736 273 753 273Q763 273 773 277L880 317C893 322 902 330 902 340C901 355 885 366 865 364Q854 363 843 359L737 319C727 315 721 309 721 300Z" fill="#b60a0c" />
      <path d="M729 303C729 291 740 284 755 284Q764 284 773 287L878 326C888 330 893 338 893 345C893 356 880 363 867 363Q855 363 843 359L738 319C731 315 729 310 729 303Z" fill="#6c0000" />
      <path d="M772 287V332L738 319C731 315 729 310 729 303C729 291 740 284 755 284Q764 284 772 287Z" fill="url(#shaft)" />
      <path d="M879 327C888 330 893 338 893 345C893 354 887 358 879 361Z" fill="#8c0000" />
      <path d="M773 277V287M880 317L878 327" />

      {/* drilled holes */}
      <ellipse cx="912" cy="424" rx="25" ry="16" transform="rotate(50 912 424)" fill="url(#shaft)" />
      <path d="M623 336C625 325 645 309 657 310C667 312 663 321 652 329C641 336 630 338 623 336Z" fill="url(#shaft)" />
      <ellipse cx="456" cy="438" rx="24" ry="14" transform="rotate(62 456 438)" fill="url(#drill)" />
      <ellipse cx="1010" cy="644" rx="26" ry="20" fill="url(#drill)" />
      <path d="M990 631C1000 622 1020 622 1030 632C1022 640 1000 640 990 631Z" fill="#8c0000" />

      {/* lightening pockets */}
      <path d={LEFT_POCKET} fill="#b60a0c" />
      <path d="M510 406C506 396 515 387 527 381C542 373 555 370 577 369C572 381 560 390 550 396L525 409Z" fill="#900000" />
      <path d="M517 375L525 386V408M557 362V371L558 390M570 362V380M515 388L518 407" />
      <path d={RIGHT_POCKET} fill="#b60a0c" />
      <path d={RIGHT_POCKET_FLOOR} fill="#940000" />
      <path d="M922 506V545M945 508V562M967 522V572M949 501L945 508M971 516L967 522M988 552H997" />
    </g>

    {/* origin triad */}
    <g strokeWidth="5">
      <path d="M220 719L240 726" stroke="#b3242a" />
      <path d="M237 721L248 729L235 731Z" fill="#d02a2f" />
      <path d="M220 719L211 731" stroke="#1b1fa0" />
      <path d="M207 727L217 734L205 738Z" fill="#2228c4" />
      <path d="M220 719V706" stroke="#1c5a24" />
      <path d="M215 708L220 697L225 708Z" fill="#1f7a2b" />
    </g>
    <g fontSize="10" fontFamily="Open Sans, sans-serif">
      <text x="217" y="697" fill="#3a8a44">Y</text>
      <text x="246" y="734" fill="#d8484c">X</text>
      <text x="201" y="743" fill="#2a2fc0">Z</text>
    </g>
  </Scene>
);

const App = () => {
  const [tab, setTab] = useState("SOLIDWORKS Inspection");
  const [query, setQuery] = useState("");

  return (
    <Window>
      <GlobalStyle />
      <TitleBar>
        <Brand>
          <Icon name="ds" size={17} />
          <BrandName>
            <b>SOLID</b>WORKS
          </BrandName>
          <MenuBar>
            {menus.map((m) => (
              <MenuButton key={m}>{m}</MenuButton>
            ))}
          </MenuBar>
          <Icon name="pin" size={12} />
        </Brand>
        <DocumentName>1370 *</DocumentName>
        <SearchBox>
          <Icon name="prompt" />
          <SearchInput
            aria-label="Search Commands"
            placeholder="Search Commands"
            value={query}
            onChange={(e) => setQuery(e.target.value)}
          />
          <Icon name="search" />
          <Icon name="caret" size={12} />
        </SearchBox>
        <WindowButtons>
          <IconButton $w={32} aria-label="Account"><Icon name="user" size={16} /></IconButton>
          <IconButton $w={32} aria-label="Help"><Icon name="help" size={16} /></IconButton>
          <IconButton $w={32} aria-label="Minimize"><Icon name="min" /></IconButton>
          <IconButton $w={33} aria-label="Restore"><Icon name="restore" /></IconButton>
          <IconButton $w={32} aria-label="Close"><Icon name="close" /></IconButton>
        </WindowButtons>
      </TitleBar>

      <QuickBar>
        <QuickTools>
          <Grip />
          {quickTools.map((t) => (
            <React.Fragment key={t.label}>
              <IconButton aria-label={t.label}><Icon name={t.icon} size={15} /></IconButton>
              {t.menu && (
                <IconButton $w={17} aria-label={t.label + " menu"}>
                  <Icon name={t.off ? "caretGray" : "caret"} size={10} />
                </IconButton>
              )}
            </React.Fragment>
          ))}
        </QuickTools>
      </QuickBar>

      <Ribbon>
        <ToolGrid>
          {gridTools.map((t, i) =>
            t ? (
              <IconButton key={i} $w={t.icon.startsWith("caret") ? 12 : 20} aria-label={t.label}>
                <Icon name={t.icon} size={t.icon.startsWith("caret") ? 10 : 15} />
              </IconButton>
            ) : (
              <span key={i} />
            )
          )}
        </ToolGrid>
        {ribbonGroups.map((group, i) => (
          <RibbonGroup key={i}>
            {group.map((b) => (
              <RibbonButton key={b.lines.join(" ")} $w={b.w} disabled={b.off}>
                <Icon name={b.icon} size={16} />
                {b.lines.map((line) => (
                  <span key={line}>{line}</span>
                ))}
              </RibbonButton>
            ))}
          </RibbonGroup>
        ))}
        <ExportGroup $columns="232px 111px">
          {exportItems.map((x) => (
            <ExportButton key={x.text} $long={x.long} disabled>
              <Icon name={x.icon} />
              {x.text}
            </ExportButton>
          ))}
        </ExportGroup>
        <ExportGroup $columns="90px" $last>
          <ExportButton disabled>
            <Icon name="netInspect" />
            Net-Inspect
          </ExportButton>
        </ExportGroup>
      </Ribbon>

      <TabRow>
        {commandTabs.map(([name, w]) => (
          <CommandTab key={name} $w={w} $active={name === tab} onClick={() => setTab(name)}>
            {name}
          </CommandTab>
        ))}
        <DocButtons>
          <IconButton aria-label="Show left pane"><Icon name="panelLeft" /></IconButton>
          <IconButton aria-label="Show right pane"><Icon name="panelRight" /></IconButton>
          <IconButton aria-label="Minimize document"><Icon name="minGray" /></IconButton>
          <IconButton aria-label="Restore document"><Icon name="restoreGray" /></IconButton>
          <IconButton aria-label="Close document"><Icon name="closeGray" /></IconButton>
        </DocButtons>
      </TabRow>

      <Workspace>
        <SidePanel>
          <Splitter><Dot /></Splitter>
          <PanelTabs>
            <PanelTab $w={33} aria-label="Feature tree"><Icon name="part" size={16} /></PanelTab>
            <PanelTab $w={31} $light $active aria-label="Properties"><Icon name="list" size={16} /></PanelTab>
            <PanelTab $w={32} aria-label="Configurations"><Icon name="config" size={16} /></PanelTab>
            <PanelTab $w={31} aria-label="Dimensions"><Icon name="target" size={16} /></PanelTab>
            <PanelTab $w={17} $cut aria-label="Display"><Icon name="ball" size={16} /></PanelTab>
            <PanelTab $w={18} $light aria-label="Scroll left"><Icon name="left" size={12} /></PanelTab>
            <PanelTab $w={17} $light aria-label="Scroll right"><Icon name="right" size={12} /></PanelTab>
          </PanelTabs>
          <PanelHeader>
            <PanelTitle>Properties</PanelTitle>
            <IconButton $w={26} aria-label="Properties help"><Icon name="helpBlue" /></IconButton>
          </PanelHeader>
          <MessageToggle>
            Message
            <Icon name="chevronUp" />
          </MessageToggle>
          <MessageBox>
            Select an entity to view or to modify
            <br />
            its properties.
          </MessageBox>
          <CollapseHandle aria-label="Collapse panel"><Dot /></CollapseHandle>
        </SidePanel>

        <Viewport>
          <Model />
          <ViewTools>
            {viewTools.map((t) => (
              <React.Fragment key={t.label}>
                <IconButton aria-label={t.label}><Icon name={t.icon} size={16} /></IconButton>
                {t.menu && (
                  <IconButton $w={12} aria-label={t.label + " menu"}><Icon name="caretGray" size={10} /></IconButton>
                )}
              </React.Fragment>
            ))}
          </ViewTools>
          <TaskPane>
            {taskTools.map(([icon, label], i) => (
              <TaskButton key={label} $active={i === 0} aria-label={label}>
                <Icon name={icon} size={16} />
              </TaskButton>
            ))}
          </TaskPane>
        </Viewport>
      </Workspace>

      <SheetTabs>
        <SheetNav aria-label="First tab"><Icon name="first" size={13} /></SheetNav>
        <SheetNav aria-label="Previous tab"><Icon name="prev" size={13} /></SheetNav>
        <SheetNav aria-label="Next tab"><Icon name="next" size={13} /></SheetNav>
        <SheetNav aria-label="Last tab"><Icon name="last" size={13} /></SheetNav>
        <SheetTab $w={60} $pad={12} $active>Model</SheetTab>
        <SheetTab $w={70} $pad={9}>3D Views</SheetTab>
        <SheetTab $w={112} $pad={10}>Motion Study 1</SheetTab>
      </SheetTabs>
      <StatusBar>
        <StatusText>SOLIDWORKS Premium 2020 SP3.0</StatusText>
        <StatusRight>
          <StatusText>Editing Part</StatusText>
          <IconButton $w={54} $h={14} aria-label="Rebuild status"><Icon name="rebuild" size={13} /></IconButton>
          <StatusText $gap={44}>MMGS</StatusText>
          <IconButton $w={44} $h={14} aria-label="Unit system"><Icon name="caretUp" size={12} /></IconButton>
          <IconButton $w={15} $h={14} aria-label="Tags"><Icon name="tag" size={13} /></IconButton>
        </StatusRight>
      </StatusBar>
    </Window>
  );
};

export default App;
